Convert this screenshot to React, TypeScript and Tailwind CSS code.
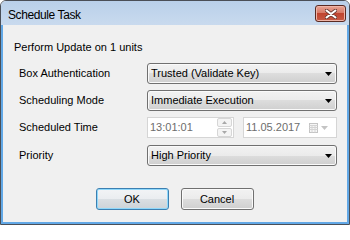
import React from "react"

function Arrow({ color = "#000" }: { color?: string }) {
  return (
    <svg width="7" height="4" viewBox="0 0 7 4">
      <path d="M0 0h7L3.5 4z" fill={color} />
    </svg>
  )
}

function Combo({ value }: { value: string }) {
  return (
    <div className="flex h-[21px] w-[190px] items-center justify-between rounded-[3px] border border-[#707070] bg-[linear-gradient(#f2f2f2,#ebebeb_50%,#dddddd_50%,#cfcfcf)] pl-[3px] pr-[4px] shadow-[inset_0_0_0_1px_#fafafa]">
      <span>{value}</span>
      <Arrow />
    </div>
  )
}

function CloseButton() {
  return (
    <div className="flex h-[17px] w-[31px] items-center justify-center rounded-[3px] border border-[#5a2a22] bg-[linear-gradient(#e8a493,#d77a68_45%,#c0442f_50%,#c75a45)] shadow-[inset_0_0_0_1px_#eeb5a8]">
      <svg width="12" height="10" viewBox="0 0 12 10">
        <path d="M1.5 1.5l9 7M10.5 1.5l-9 7" stroke="#6b3a33" strokeWidth="3.6" strokeLinecap="round" />
        <path d="M1.5 1.5l9 7M10.5 1.5l-9 7" stroke="#fff" strokeWidth="2" strokeLinecap="round" />
      </svg>
    </div>
  )
}

function Spinner() {
  return (
    <div className="flex h-[19px] w-[15px] flex-col gap-[1px]">
      <div className="flex h-[9px] items-center justify-center rounded-[2px] border border-[#d6d6d6] bg-[#f4f4f4]">
        <svg width="5" height="3" viewBox="0 0 5 3"><path d="M0 3h5L2.5 0z" fill="#a8a8a8" /></svg>
      </div>
      <div className="flex h-[9px] items-center justify-center rounded-[2px] border border-[#d6d6d6] bg-[#f4f4f4]">
        <svg width="5" height="3" viewBox="0 0 5 3"><path d="M0 0h5L2.5 3z" fill="#a8a8a8" /></svg>
      </div>
    </div>
  )
}

function CalendarIcon() {
  return (
    <svg width="9" height="10" viewBox="0 0 9 10">
      <rect x="0.5" y="0.5" width="8" height="9" fill="#f6f6f6" stroke="#c4c4c4" />
      <path d="M0.5 2.5h8M0.5 4.5h8M0.5 6.5h8M3 2.5v7M6 2.5v7" stroke="#d4d4d4" strokeWidth="1" />
    </svg>
  )
}

function Row({ label, children }: { label: string; children: React.ReactNode }) {
  return (
    <div className="flex h-[21px] items-center">
      <div className="w-[128px]">{label}</div>
      {children}
    </div>
  )
}

export default function App() {
  return (
    <div className="h-[225px] w-[350px] bg-white font-['Liberation_Sans',Arial,sans-serif] text-[11px] text-black">
      <div className="flex h-full w-full flex-col overflow-hidden rounded-t-[6px] border border-[#4a4f57]">
        {/* title bar */}
        <div className="flex h-[24px] shrink-0 items-start justify-between bg-[linear-gradient(#b9d0ea,#c9daee)] pl-[7px] pr-[3px]">
          <span className="mt-[5px] text-[12px] tracking-[-0.4px]">Schedule Task</span>
          <div className="mt-[4px]">
            <CloseButton />
          </div>
        </div>

        {/* body */}
        <div className="flex flex-1 flex-col border-x-2 border-b-2 border-[#62a8e6] bg-[#f0f0f0]">
          <div className="pl-[11px] pt-[15px] leading-[14px]">Perform Update on 1 units</div>

          <div className="mt-[9px] flex flex-col gap-[6px] pl-[16px]">
            <Row label="Box Authentication">
              <Combo value="Trusted (Validate Key)" />
            </Row>
            <Row label="Scheduling Mode">
              <Combo value="Immediate Execution" />
            </Row>
            <Row label="Scheduled Time">
              <div className="flex w-[190px] gap-[9px] text-[#6d6d6d]">
                <div className="flex h-[21px] w-[87px] items-center justify-between border border-[#d5d5d5] bg-white pl-[2px] pr-[1px]">
                  <span>13:01:01</span>
                  <Spinner />
                </div>
                <div className="flex h-[21px] w-[94px] items-center justify-between border border-[#d5d5d5] bg-white pl-[2px] pr-[8px]">
                  <span>11.05.2017</span>
                  <div className="flex items-center gap-[3px]">
                    <CalendarIcon />
                    <Arrow color="#c4c4c4" />
                  </div>
                </div>
              </div>
            </Row>
            <div className="mt-[1px]">
              <Row label="Priority">
                <Combo value="High Priority" />
              </Row>
            </div>
          </div>

          <div className="mt-[22px] flex justify-center gap-[12px] pr-[1px]">
            <button className="flex h-[22px] w-[73px] items-center justify-center rounded-[3px] border border-[#3c7fb1] bg-[linear-gradient(#f2f4f6,#eaedf0_50%,#dadfe3_50%,#cdd3d8)] shadow-[inset_0_0_0_1px_#8fd8fb]">
              OK
            </button>
            <button className="flex h-[22px] w-[73px] items-center justify-center rounded-[3px] border border-[#707070] bg-[linear-gradient(#f2f2f2,#ebebeb_50%,#dddddd_50%,#cfcfcf)] shadow-[inset_0_0_0_1px_#fafafa]">
              Cancel
            </button>
          </div>
        </div>
      </div>
    </div>
  )
}
